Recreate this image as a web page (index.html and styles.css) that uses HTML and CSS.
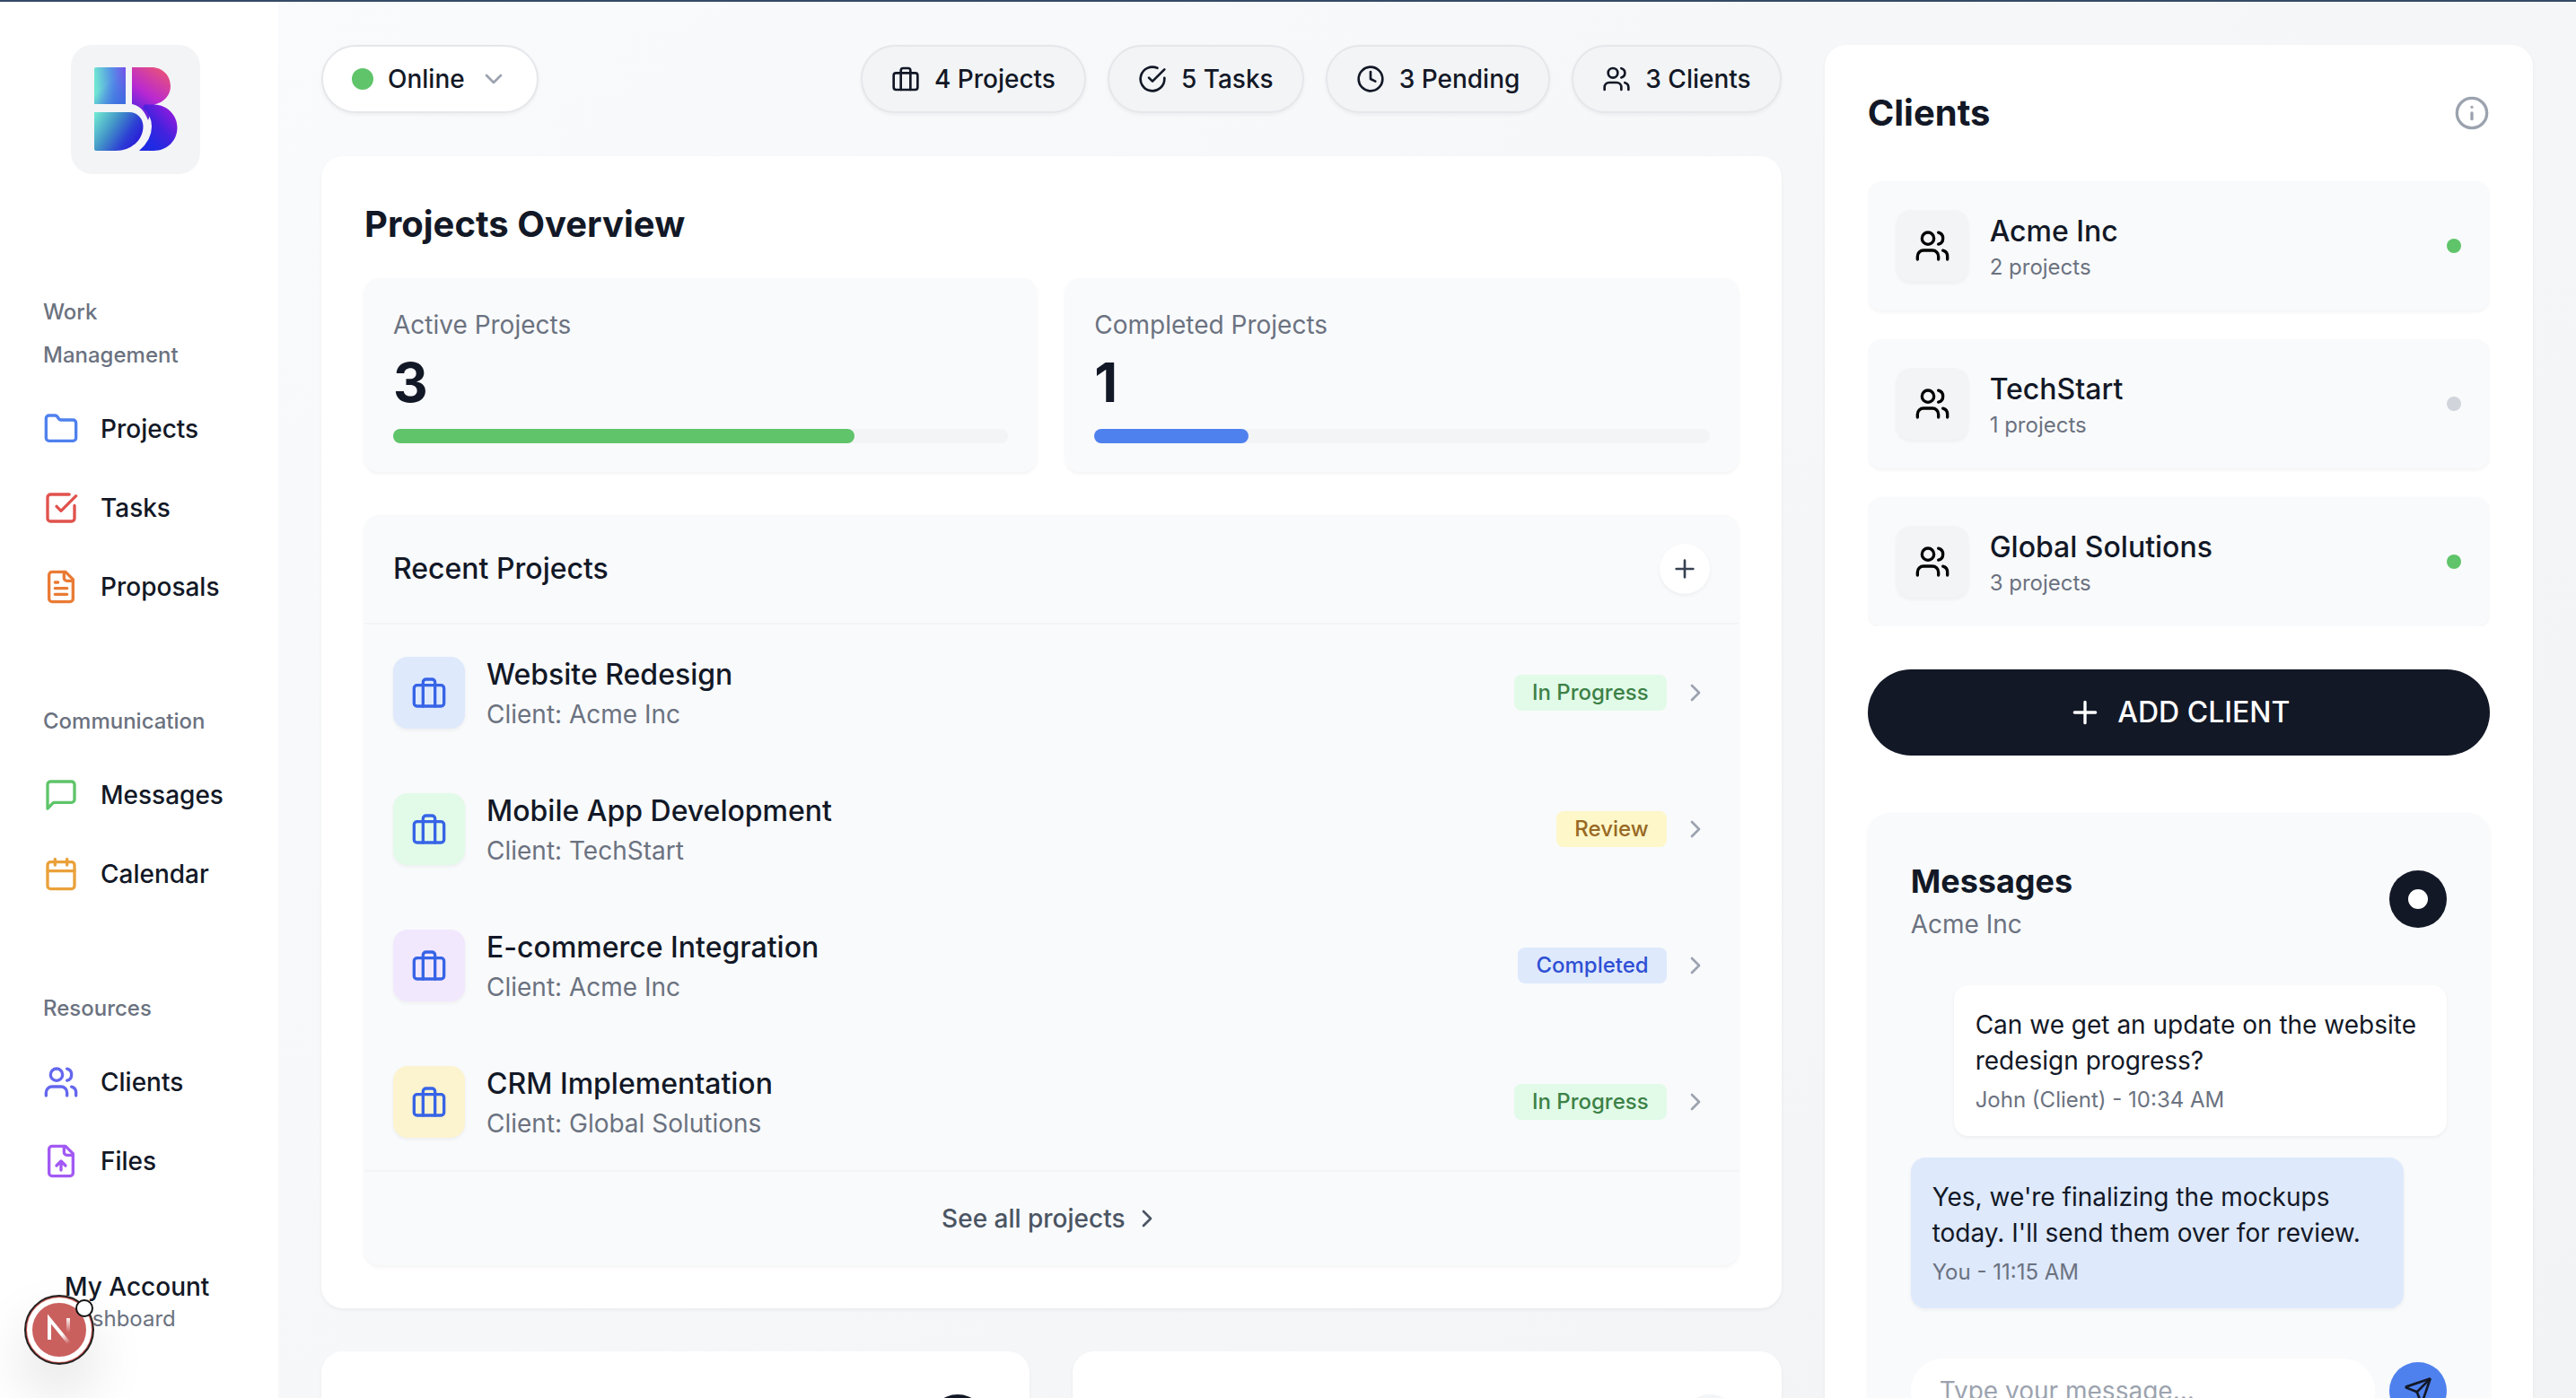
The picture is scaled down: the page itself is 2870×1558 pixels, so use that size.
FILE: index.html
```html
<!DOCTYPE html>
<html lang="en">
<head>
<meta charset="utf-8">
<title>Dashboard</title>
<link rel="stylesheet" href="styles.css">
</head>
<body>
<svg class="sprite" aria-hidden="true">
  <symbol id="i-folder" viewBox="0 0 24 24"><path d="M20 20a2 2 0 0 0 2-2V8a2 2 0 0 0-2-2h-7.9a2 2 0 0 1-1.69-.9L9.6 3.9A2 2 0 0 0 7.93 3H4a2 2 0 0 0-2 2v13a2 2 0 0 0 2 2Z"/></symbol>
  <symbol id="i-task" viewBox="0 0 24 24"><path d="M21 10.5V19a2 2 0 0 1-2 2H5a2 2 0 0 1-2-2V5a2 2 0 0 1 2-2h12.5"/><path d="m9 11 3 3L22 4"/></symbol>
  <symbol id="i-file" viewBox="0 0 24 24"><path d="M15 2H6a2 2 0 0 0-2 2v16a2 2 0 0 0 2 2h12a2 2 0 0 0 2-2V7Z"/><path d="M14 2v4a2 2 0 0 0 2 2h4M10 9H8M16 13H8M16 17H8"/></symbol>
  <symbol id="i-message" viewBox="0 0 24 24"><path d="M21 15a2 2 0 0 1-2 2H7l-4 4V5a2 2 0 0 1 2-2h14a2 2 0 0 1 2 2z"/></symbol>
  <symbol id="i-calendar" viewBox="0 0 24 24"><path d="M8 2v4M16 2v4M3 10h18"/><rect x="3" y="4" width="18" height="18" rx="2"/></symbol>
  <symbol id="i-users" viewBox="0 0 24 24"><path d="M16 21v-2a4 4 0 0 0-4-4H6a4 4 0 0 0-4 4v2"/><circle cx="9" cy="7" r="4"/><path d="M22 21v-2a4 4 0 0 0-3-3.87M16 3.13a4 4 0 0 1 0 7.75"/></symbol>
  <symbol id="i-upload" viewBox="0 0 24 24"><path d="M15 2H6a2 2 0 0 0-2 2v16a2 2 0 0 0 2 2h12a2 2 0 0 0 2-2V7Z"/><path d="M14 2v4a2 2 0 0 0 2 2h4M12 12v6M15 15l-3-3-3 3"/></symbol>
  <symbol id="i-down" viewBox="0 0 24 24"><path d="m6 9 6 6 6-6"/></symbol>
  <symbol id="i-right" viewBox="0 0 24 24"><path d="m9 18 6-6-6-6"/></symbol>
  <symbol id="i-case" viewBox="0 0 24 24"><path d="M16 21V5a2 2 0 0 0-2-2h-4a2 2 0 0 0-2 2v16"/><rect x="2" y="7" width="20" height="14" rx="2"/></symbol>
  <symbol id="i-check" viewBox="0 0 24 24"><path d="M22 11.08V12a10 10 0 1 1-5.93-9.14"/><path d="m9 11 3 3L22 4"/></symbol>
  <symbol id="i-clock" viewBox="0 0 24 24"><circle cx="12" cy="12" r="10"/><path d="M12 6v6l4 2"/></symbol>
  <symbol id="i-info" viewBox="0 0 24 24"><circle cx="12" cy="12" r="10"/><path d="M12 16v-4M12 8h.01"/></symbol>
  <symbol id="i-plus" viewBox="0 0 24 24"><path d="M5 12h14M12 5v14"/></symbol>
  <symbol id="i-send" viewBox="0 0 24 24"><path d="M14.536 21.686a.5.5 0 0 0 .937-.024l6.5-19a.496.496 0 0 0-.635-.635l-19 6.5a.5.5 0 0 0-.024.937l7.93 3.18a2 2 0 0 1 1.112 1.11z"/><path d="m21.854 2.147-10.94 10.939"/></symbol>
</svg>

<div class="app">
  <aside class="sidebar">
    <a class="logo" href="#" aria-label="Home">
      <svg viewBox="0 0 144 144">
        <defs>
          <linearGradient id="ga" x1="0" y1="0.1" x2="1" y2="0"><stop offset="0" stop-color="#6fe6d2"/><stop offset=".55" stop-color="#5590e6"/><stop offset="1" stop-color="#7650ea"/></linearGradient>
          <linearGradient id="ga2" x1="0.4" y1="0.2" x2="1" y2="1"><stop offset="0.2" stop-color="#3a6ee0" stop-opacity="0"/><stop offset="1" stop-color="#3a6ee0"/></linearGradient>
          <linearGradient id="gb" gradientUnits="userSpaceOnUse" x1="112" y1="34" x2="66" y2="98"><stop offset="0" stop-color="#e8517c"/><stop offset=".42" stop-color="#b828d2"/><stop offset=".66" stop-color="#6a25dc"/><stop offset="1" stop-color="#2c2ae0"/></linearGradient>
          <linearGradient id="gd" gradientUnits="userSpaceOnUse" x1="120" y1="72" x2="84" y2="104"><stop offset="0" stop-color="#a518dc"/><stop offset=".6" stop-color="#4222de"/><stop offset="1" stop-color="#1f2ae2"/></linearGradient>
          <linearGradient id="gc" x1="0" y1="0.1" x2="1" y2="0.6"><stop offset="0" stop-color="#6fe6d2"/><stop offset=".4" stop-color="#4293c8"/><stop offset=".75" stop-color="#2c3fd4"/><stop offset="1" stop-color="#2a1bd8"/></linearGradient>
        </defs>
        <path fill="url(#ga)" d="M28 25H61V66H26V27Q26 25 28 25Z"/>
        <path fill="url(#ga2)" d="M28 25H61V66H26V27Q26 25 28 25Z"/>
        <path fill="url(#gb)" d="M68 25H90C102 25 111 34 111 46C111 56 104 64 93 66.500L86 84Q80 68 68 66Z"/>
        <path fill="url(#gd)" d="M82 66.500H93C107 67 118.500 78 118.500 92C118.500 107 107 118 92 118H76Q90 106 90 91Q90 78 80 70.500Z"/>
        <path fill="url(#gc)" d="M26 75H65C74 75 80.500 82 80.500 91C80.500 106 67 118 50 118H28Q26 118 26 116Z"/>
      </svg>
    </a>
    <nav class="nav">
      <section class="nav-group">
        <h2>Work Management</h2>
        <a href="#"><svg class="icon lg c-blue"><use href="#i-folder"/></svg>Projects</a>
        <a href="#"><svg class="icon lg c-red"><use href="#i-task"/></svg>Tasks</a>
        <a href="#"><svg class="icon lg c-orange"><use href="#i-file"/></svg>Proposals</a>
      </section>
      <section class="nav-group">
        <h2>Communication</h2>
        <a href="#"><svg class="icon lg c-green"><use href="#i-message"/></svg>Messages</a>
        <a href="#"><svg class="icon lg c-amber"><use href="#i-calendar"/></svg>Calendar</a>
      </section>
      <section class="nav-group">
        <h2>Resources</h2>
        <a href="#"><svg class="icon lg c-indigo"><use href="#i-users"/></svg>Clients</a>
        <a href="#"><svg class="icon lg c-purple"><use href="#i-upload"/></svg>Files</a>
      </section>
    </nav>
    <a class="account" href="#"><strong>My Account</strong><span>Dashboard</span></a>
  </aside>

  <main class="main">
    <div class="work">
      <header class="topbar">
        <button class="pill status" type="button"><span class="status-dot"></span>Online<svg class="icon c-mute"><use href="#i-down"/></svg></button>
        <ul class="counts">
          <li class="pill"><svg class="icon"><use href="#i-case"/></svg>4 Projects</li>
          <li class="pill"><svg class="icon"><use href="#i-check"/></svg>5 Tasks</li>
          <li class="pill"><svg class="icon"><use href="#i-clock"/></svg>3 Pending</li>
          <li class="pill"><svg class="icon"><use href="#i-users"/></svg>3 Clients</li>
        </ul>
      </header>

      <section class="card overview">
        <h1>Projects Overview</h1>
        <div class="stats">
          <div class="panel stat">
            <p>Active Projects</p><strong>3</strong>
            <div class="bar"><div class="fill green" style="width:75%"></div></div>
          </div>
          <div class="panel stat">
            <p>Completed Projects</p><strong>1</strong>
            <div class="bar"><div class="fill blue" style="width:25%"></div></div>
          </div>
        </div>
        <div class="panel recent">
          <div class="recent-head">
            <h2>Recent Projects</h2>
            <button class="add" type="button" aria-label="Add project"><svg class="icon"><use href="#i-plus"/></svg></button>
          </div>
          <a class="project" href="#">
            <span class="tile t-blue"><svg class="icon lg"><use href="#i-case"/></svg></span>
            <span class="names"><b>Website Redesign</b><span>Client: Acme Inc</span></span>
            <span class="badge b-green">In Progress</span><svg class="icon c-mute"><use href="#i-right"/></svg>
          </a>
          <a class="project" href="#">
            <span class="tile t-green"><svg class="icon lg"><use href="#i-case"/></svg></span>
            <span class="names"><b>Mobile App Development</b><span>Client: TechStart</span></span>
            <span class="badge b-yellow">Review</span><svg class="icon c-mute"><use href="#i-right"/></svg>
          </a>
          <a class="project" href="#">
            <span class="tile t-purple"><svg class="icon lg"><use href="#i-case"/></svg></span>
            <span class="names"><b>E-commerce Integration</b><span>Client: Acme Inc</span></span>
            <span class="badge b-blue">Completed</span><svg class="icon c-mute"><use href="#i-right"/></svg>
          </a>
          <a class="project" href="#">
            <span class="tile t-yellow"><svg class="icon lg"><use href="#i-case"/></svg></span>
            <span class="names"><b>CRM Implementation</b><span>Client: Global Solutions</span></span>
            <span class="badge b-green">In Progress</span><svg class="icon c-mute"><use href="#i-right"/></svg>
          </a>
          <a class="see-all" href="#">See all projects<svg class="icon"><use href="#i-right"/></svg></a>
        </div>
      </section>

      <div class="lower">
        <section class="card lower-card"><span class="round dark"></span></section>
        <section class="card lower-card"><span class="round pale"></span></section>
      </div>
    </div>

    <aside class="card side">
      <header class="side-head"><h1>Clients</h1><svg class="icon lg c-mute"><use href="#i-info"/></svg></header>
      <div class="clients">
        <a class="panel client" href="#">
          <span class="tile t-gray"><svg class="icon lg"><use href="#i-users"/></svg></span>
          <span class="names"><b>Acme Inc</b><small>2 projects</small></span><span class="dot on"></span>
        </a>
        <a class="panel client" href="#">
          <span class="tile t-gray"><svg class="icon lg"><use href="#i-users"/></svg></span>
          <span class="names"><b>TechStart</b><small>1 projects</small></span><span class="dot"></span>
        </a>
        <a class="panel client" href="#">
          <span class="tile t-gray"><svg class="icon lg"><use href="#i-users"/></svg></span>
          <span class="names"><b>Global Solutions</b><small>3 projects</small></span><span class="dot on"></span>
        </a>
      </div>
      <button class="add-client" type="button"><svg class="icon lg"><use href="#i-plus"/></svg>ADD CLIENT</button>

      <section class="panel chat">
        <header class="chat-head">
          <div><h2>Messages</h2><p>Acme Inc</p></div>
          <button class="round dark" type="button" aria-label="Toggle chat"><span class="hole"></span></button>
        </header>
        <div class="bubbles">
          <div class="bubble theirs"><p>Can we get an update on the website redesign progress?</p><small>John (Client) - 10:34 AM</small></div>
          <div class="bubble mine"><p>Yes, we're finalizing the mockups today. I'll send them over for review.</p><small>You - 11:15 AM</small></div>
        </div>
        <form class="composer">
          <input type="text" placeholder="Type your message..." aria-label="Message">
          <button class="round send" type="button" aria-label="Send"><svg class="icon"><use href="#i-send"/></svg></button>
        </form>
      </section>
    </aside>
  </main>
</div>

<button class="devtools" type="button" aria-label="Developer tools">
  <svg viewBox="0 0 78 78">
    <defs>
      <linearGradient id="n1" gradientUnits="userSpaceOnUse" x1="42" y1="44" x2="50" y2="54"><stop stop-color="#fff"/><stop offset="1" stop-color="#fff" stop-opacity="0"/></linearGradient>
      <linearGradient id="n2" gradientUnits="userSpaceOnUse" x1="48" y1="25" x2="48" y2="42"><stop stop-color="#fff"/><stop offset="1" stop-color="#fff" stop-opacity="0"/></linearGradient>
    </defs>
    <circle cx="39" cy="39" r="38" fill="#c94f4b" stroke="#222" stroke-width="2"/>
    <circle cx="39" cy="39" r="33" fill="#ca605e" stroke="#fff" stroke-width="6"/>
    <path d="M28 50V27L50 54" fill="none" stroke="url(#n1)" stroke-width="4"/>
    <path d="M47 26h4v16h-4z" fill="url(#n2)"/>
    <circle cx="67" cy="15" r="9" fill="#fff" stroke="#111" stroke-width="2"/>
  </svg>
</button>
</body>
</html>
```
FILE: styles.css
```css
* { box-sizing: border-box; margin: 0; }

body {
  font-family: Inter, "Liberation Sans", sans-serif;
  font-size: 28px;
  line-height: 40px;
  color: #121826;
}

a { color: inherit; text-decoration: none; }
button, input { font: inherit; color: inherit; border: 0; padding: 0; }
h1 { font-size: 40px; line-height: 56px; font-weight: 700; }

.sprite { position: absolute; width: 0; height: 0; }
.icon {
  flex: none;
  width: 32px;
  height: 32px;
  fill: none;
  stroke: currentColor;
  stroke-width: 2;
  stroke-linecap: round;
  stroke-linejoin: round;
}
.icon.lg { width: 40px; height: 40px; }

.c-blue { color: #4f81ee; }
.c-red { color: #e0524d; }
.c-orange { color: #e97b35; }
.c-green { color: #5fc46a; }
.c-amber { color: #eaa13b; }
.c-indigo { color: #6467ee; }
.c-purple { color: #a259f4; }
.c-mute { color: #9ca3af; }

.app {
  display: flex;
  height: 100vh;
  overflow: hidden;
  border-top: 2px solid #344b66;
  background: linear-gradient(135deg, #fafbfc, #f2f3f5);
}

/* Sidebar */
.sidebar {
  flex: none;
  width: 310px;
  padding: 48px 56px 48px 48px;
  display: flex;
  flex-direction: column;
  background: #fff;
}
.logo {
  flex: none;
  align-self: center;
  width: 144px;
  height: 144px;
  border-radius: 24px;
  background: #f3f4f6;
}
.logo svg { display: block; }
.nav { display: flex; flex-direction: column; gap: 88px; margin-top: 130px; }
.nav-group { display: flex; flex-direction: column; gap: 12px; }
.nav-group h2 {
  margin-bottom: 8px;
  font-size: 24px;
  line-height: 48px;
  font-weight: 500;
  color: #6b7280;
}
.nav-group a {
  display: flex;
  align-items: center;
  gap: 24px;
  height: 76px;
  font-weight: 500;
}
.account {
  display: flex;
  flex-direction: column;
  margin-top: 84px;
  padding-left: 24px;
  line-height: 36px;
}
.account strong { font-weight: 500; }
.account span { font-size: 24px; color: #6b7280; }

/* Main grid */
.main {
  flex: 1;
  min-width: 0;
  display: grid;
  grid-template-columns: repeat(12, minmax(0, 1fr));
  align-content: start;
  gap: 48px;
  padding: 48px;
}
.work { grid-column: span 8; display: flex; flex-direction: column; gap: 48px; }
.side { grid-column: span 4; }

.card {
  padding: 48px;
  border-radius: 24px;
  background: #fff;
  box-shadow: 0 2px 4px rgba(0, 0, 0, .05);
}
.panel {
  border-radius: 16px;
  background: #f9fafc;
  box-shadow: 0 2px 4px rgba(0, 0, 0, .05);
}

/* Top bar */
.topbar { display: flex; justify-content: space-between; align-items: center; }
.counts { display: flex; gap: 24px; padding: 0; list-style: none; }
.pill {
  display: flex;
  align-items: center;
  gap: 16px;
  height: 76px;
  padding: 0 32px;
  border: 2px solid #e5e7eb;
  border-radius: 38px;
  background: #f3f4f6;
  font-weight: 500;
  box-shadow: 0 2px 4px rgba(0, 0, 0, .05);
}
.status { background: #fff; }
.status-dot { width: 24px; height: 24px; border-radius: 50%; background: #5fc46a; }

/* Overview */
.stats { display: grid; grid-template-columns: 1fr 1fr; gap: 32px; margin: 32px 0 48px; }
.stat { padding: 32px; }
.stat p { color: #6b7280; }
.stat strong { display: block; margin: 8px 0 16px; font-size: 60px; line-height: 72px; font-weight: 700; }
.bar { height: 16px; border-radius: 8px; background: #f3f4f6; }
.fill { height: 100%; border-radius: 8px; }
.fill.green { background: #5fc46a; }
.fill.blue { background: #4f81ee; }

.recent-head {
  display: flex;
  justify-content: space-between;
  align-items: center;
  padding: 32px;
  border-bottom: 2px solid #f3f4f6;
}
.recent-head h2 { font-size: 32px; line-height: 48px; font-weight: 500; }
.add {
  display: grid;
  place-items: center;
  width: 56px;
  height: 56px;
  border-radius: 50%;
  background: #fff;
  color: #374151;
  box-shadow: 0 2px 4px rgba(0, 0, 0, .05);
}

.project { display: flex; align-items: center; padding: 32px; }
.tile {
  flex: none;
  display: grid;
  place-items: center;
  width: 80px;
  height: 80px;
  border-radius: 16px;
  color: #3764e6;
  box-shadow: 0 2px 4px rgba(0, 0, 0, .05);
}
.t-blue { background: #dee9fc; }
.t-green { background: #e1fbe8; }
.t-purple { background: #f2e8fd; }
.t-yellow { background: #fcf3cf; }
.t-gray { background: #f3f4f6; color: #000; }
.names { display: flex; flex-direction: column; margin: 0 auto 0 24px; color: #6b7280; }
.names b { font-size: 32px; line-height: 48px; font-weight: 500; color: #121826; }
.names small { font-size: 24px; line-height: 32px; }
.badge {
  margin-right: 16px;
  padding: 4px 20px;
  border-radius: 8px;
  font-size: 24px;
  line-height: 32px;
  font-weight: 500;
}
.b-green { background: #e1fbe8; color: #3d8147; }
.b-yellow { background: #fdf7c9; color: #986824; }
.b-blue { background: #dee9fc; color: #2e4fd4; }

.see-all {
  display: flex;
  justify-content: center;
  align-items: center;
  gap: 8px;
  padding: 32px;
  border-top: 2px solid #f3f4f6;
  font-weight: 500;
  color: #4b5563;
}

.lower { display: grid; grid-template-columns: 1fr 1fr; gap: 48px; }
.lower-card { display: flex; justify-content: flex-end; }
.round {
  flex: none;
  display: grid;
  place-items: center;
  width: 64px;
  height: 64px;
  border-radius: 50%;
}
.dark { background: #121826; }
.pale { background: #f3f4f6; }

/* Clients column */
.side-head { display: flex; justify-content: space-between; align-items: center; }
.clients { display: flex; flex-direction: column; gap: 32px; margin: 48px 0; overflow: hidden; }
.client { display: flex; align-items: center; padding: 32px; }
.dot { width: 16px; height: 16px; border-radius: 50%; background: #d1d5db; }
.dot.on { background: #5fc46a; }
.add-client {
  display: flex;
  justify-content: center;
  align-items: center;
  gap: 16px;
  width: 100%;
  height: 96px;
  border-radius: 48px;
  background: #121826;
  color: #fff;
  font-size: 32px;
  font-weight: 500;
}

/* Chat */
.chat { margin-top: 64px; padding: 48px; border-radius: 24px; }
.chat-head { display: flex; justify-content: space-between; align-items: center; }
.chat-head h2 { font-size: 36px; line-height: 56px; font-weight: 700; }
.chat-head p { color: #6b7280; }
.hole { width: 22px; height: 22px; border-radius: 50%; background: #fff; }
.bubbles { display: flex; flex-direction: column; gap: 24px; margin: 48px 0 56px; }
.bubble { padding: 24px; border-radius: 16px; box-shadow: 0 2px 4px rgba(0, 0, 0, .05); }
.bubble small { display: block; margin-top: 8px; font-size: 24px; line-height: 32px; color: #6b7280; }
.theirs { margin-left: 48px; background: #fff; }
.mine { margin-right: 48px; background: #dee9fc; }
.composer { display: flex; align-items: center; gap: 16px; }
.composer input {
  flex: 1;
  min-width: 0;
  height: 72px;
  padding: 0 32px;
  border-radius: 36px;
  background: #fff;
}
.composer input::placeholder { color: #9ca3af; }
.send { background: #4f81ee; color: #121826; }

/* Floating developer badge */
.devtools {
  position: fixed;
  left: 27px;
  bottom: 37px;
  width: 78px;
  height: 78px;
  border-radius: 50%;
  background: none;
  box-shadow: 0 32px 64px rgba(0, 0, 0, .12);
}
.devtools svg { display: block; overflow: visible; }
```
